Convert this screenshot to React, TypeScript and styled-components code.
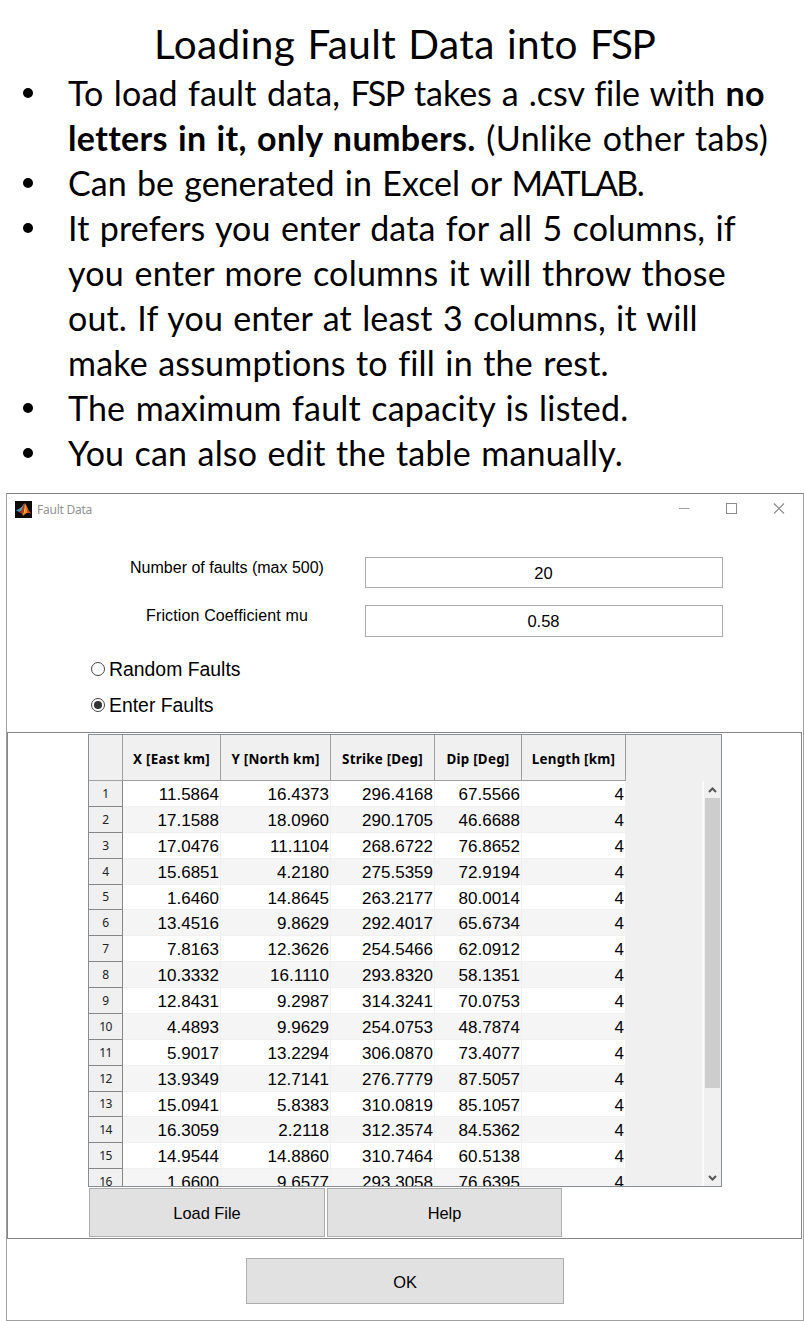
import React, { useState } from 'react';
import styled, { createGlobalStyle } from 'styled-components';

const GlobalStyle = createGlobalStyle`
  *, *::before, *::after { box-sizing: border-box; }
  body {
    margin: 0;
    background: #fff;
    color: #000;
    font-family: 'Liberation Sans', Arial, sans-serif;
  }
`;

const Page = styled.main`
  width: 804px;
  height: 1321px;
  overflow: hidden;
  background: #fff;
`;

/* ---------- Instructions ---------- */

const Slide = styled.section`
  height: 493px;
  padding-top: 21px;
  font-family: Lato, Carlito, sans-serif;
  font-variant-ligatures: none;
  word-spacing: 1.5px;
  white-space: nowrap;
`;

const Title = styled.h1`
  margin: 0 0 0 154px;
  height: 49px;
  font-size: 40.5px;
  font-weight: 400;
  line-height: 45px;
  letter-spacing: 0.38px;
`;

const Bullets = styled.ul`
  margin: 0;
  padding: 0;
  list-style: none;
`;

const Bullet = styled.li`
  display: flex;
  padding-left: 23px;

  &::before {
    content: '';
    flex: none;
    width: 10px;
    height: 10px;
    margin: 18px 35px 0 0;
    border-radius: 50%;
    background: #000;
  }
`;

const Line = styled.span<{ $track: number }>`
  display: block;
  height: 45px;
  font-size: 34px;
  line-height: 45px;
  letter-spacing: ${p => p.$track}px;
`;

const Strong = styled.strong`
  font-weight: 700;
  letter-spacing: 0.36px;
`;

const Caps = styled.span<{ $track: number }>`
  letter-spacing: ${p => p.$track}px;
`;

/* ---------- Dialog ---------- */

const Dialog = styled.section`
  display: flex;
  flex-direction: column;
  width: 798px;
  height: 828px;
  margin-left: 6px;
  border: 1px solid #a0a0a0;
  border-top-color: #838383;
`;

const TitleBar = styled.header`
  display: flex;
  align-items: center;
  height: 30px;
  padding: 0 18px 0 8px;
`;

const Caption = styled.span`
  flex: 1;
  margin-left: 5px;
  font: 12px 'Noto Sans', sans-serif;
  letter-spacing: -0.25px;
  color: #929292;
`;

const WindowControls = styled.div`
  display: flex;
  gap: 36px;
`;

const Form = styled.div`
  height: 208px;
  padding-top: 33px;
`;

const Field = styled.label<{ $gap: number; $height: number }>`
  display: flex;
  height: ${p => p.$height}px;
  margin-bottom: ${p => p.$gap}px;
`;

const FieldLabel = styled.span<{ $track?: number }>`
  width: 278px;
  margin: 1px 0 0 81px;
  font-size: 16px;
  line-height: 20px;
  letter-spacing: ${p => p.$track ?? 0}px;
  text-align: center;
`;

const FieldInput = styled.input`
  width: 358px;
  margin: 0 0 0 -1px;
  padding: 1px 1px 0 0;
  border: 1px solid #abadb3;
  border-radius: 0;
  background: #fff;
  font: 16.5px 'Liberation Sans', Arial, sans-serif;
  text-align: center;
  outline: none;
`;

const RadioRow = styled.label`
  display: flex;
  align-items: center;
  height: 36px;
  padding-left: 84px;
  font-size: 19.4px;
`;

const RadioText = styled.span`
  padding-top: 1px;
`;

const RadioDot = styled.span<{ $on: boolean }>`
  display: grid;
  place-items: center;
  width: 14px;
  height: 14px;
  margin-right: 4px;
  border: 1px solid #444;
  border-radius: 50%;

  &::after {
    content: '';
    width: 8px;
    height: 8px;
    border-radius: 50%;
    background: ${p => (p.$on ? '#333' : 'transparent')};
  }
`;

const HiddenRadio = styled.input`
  appearance: none;
  width: 0;
  height: 0;
  margin: 0;
`;

const Panel = styled.div`
  width: 795px;
  height: 507px;
  padding: 1px 0 0 80px;
  border: 1px solid #868686;
`;

/* ---------- Table ---------- */

const TableFrame = styled.div`
  display: flex;
  width: 634px;
  height: 453px;
  overflow: hidden;
  border: 1px solid #888d96;
  background: #f0f0f0;
`;

const columns = '34px 98px 110px 104px 87px 104px';

const Grid = styled.div`
  width: 537px;
  flex: none;
`;

const HeadRow = styled.div`
  display: grid;
  grid-template-columns: ${columns};
  height: 46px;
`;

const HeadCell = styled.div`
  display: flex;
  align-items: center;
  justify-content: center;
  padding-top: 3px;
  border-right: 1px solid #a0a0a0;
  border-bottom: 1px solid #a0a0a0;
  font: 700 13.4px 'Noto Sans', sans-serif;
  letter-spacing: 0.24px;
  white-space: nowrap;
`;

const Row = styled.div<{ $alt: boolean }>`
  display: grid;
  grid-template-columns: ${columns};
  grid-template-rows: 100%;
  height: 25.88px;
  background: ${p => (p.$alt ? '#f5f5f5' : '#fff')};
`;

const RowNumber = styled.div`
  display: flex;
  align-items: center;
  justify-content: center;
  padding-top: 1px;
  border-right: 1px solid #868686;
  border-bottom: 1px solid #868686;
  background: #f0f0f0;
  font: 12px/16px 'Noto Sans', sans-serif;
  letter-spacing: -0.5px;
  color: #222;
`;

const Cell = styled.div`
  padding: 2px 1px 0 0;
  border-right: 1px solid #f0f0f0;
  border-bottom: 1px solid #f0f0f0;
  font-size: 17px;
  line-height: 24px;
  text-align: right;
`;

const ScrollBar = styled.div`
  display: flex;
  flex-direction: column;
  align-items: center;
  width: 19px;
  margin: 46px 0 0 auto;
  border-left: 2px solid #fafafa;
`;

const ArrowButton = styled.span`
  display: grid;
  place-items: center;
  width: 17px;
  height: 17px;
`;

const Thumb = styled.div`
  width: 15px;
  height: 290px;
  margin-bottom: auto;
  background: #cdcdcd;
`;

/* ---------- Buttons ---------- */

const Actions = styled.div`
  display: flex;
  gap: 2px;
  padding: 1px 0 0 1px;
`;

const Button = styled.button<{ $width: number; $height: number }>`
  width: ${p => p.$width}px;
  height: ${p => p.$height}px;
  padding: 2px 0 0;
  border: 1px solid #adadad;
  border-radius: 0;
  background: #e1e1e1;
  color: #000;
  font: 16.4px 'Liberation Sans', Arial, sans-serif;
`;

const Footer = styled.footer`
  padding: 19px 0 0 239px;
`;

const faults: string[][] = [
  ['11.5864', '16.4373', '296.4168', '67.5566', '4'],
  ['17.1588', '18.0960', '290.1705', '46.6688', '4'],
  ['17.0476', '11.1104', '268.6722', '76.8652', '4'],
  ['15.6851', '4.2180', '275.5359', '72.9194', '4'],
  ['1.6460', '14.8645', '263.2177', '80.0014', '4'],
  ['13.4516', '9.8629', '292.4017', '65.6734', '4'],
  ['7.8163', '12.3626', '254.5466', '62.0912', '4'],
  ['10.3332', '16.1110', '293.8320', '58.1351', '4'],
  ['12.8431', '9.2987', '314.3241', '70.0753', '4'],
  ['4.4893', '9.9629', '254.0753', '48.7874', '4'],
  ['5.9017', '13.2294', '306.0870', '73.4077', '4'],
  ['13.9349', '12.7141', '276.7779', '87.5057', '4'],
  ['15.0941', '5.8383', '310.0819', '85.1057', '4'],
  ['16.3059', '2.2118', '312.3574', '84.5362', '4'],
  ['14.9544', '14.8860', '310.7464', '60.5138', '4'],
  ['1.6600', '9.6577', '293.3058', '76.6395', '4'],
];

const headings = ['', 'X [East km]', 'Y [North km]', 'Strike [Deg]', 'Dip [Deg]', 'Length [km]'];

const MatlabIcon = () => (
  <svg width="17" height="17" viewBox="0 0 17 17">
    <rect width="17" height="17" fill="#0c0b0c" />
    <path d="M1 9.3 4.6 7.6 6.4 9.2 4.2 11.3Z" fill="#3d8fb5" />
    <path d="M4.6 7.6C6.6 7 7.5 4.6 9.2 2.6L7.6 8.6 6.2 10.6 5.2 9.6Z" fill="#62a6b4" />
    <path d="M4.2 11.3C6.6 10.6 7.4 6 9.6 2.2 10.2 5 9.6 9 7.8 14.6 6.8 12.6 5.8 11.6 4.2 11.3Z" fill="#b8371b" />
    <path d="M9.8 2C11.6 3.6 12.6 9 16 12.6 12.6 10.6 10.6 12.6 7.6 15.2 9.4 10.6 9.8 6.4 9.8 2Z" fill="#f08a24" />
    <path d="M9.8 3C10.4 6 10.6 9 9 12.6L7.9 14.6C9.3 10.6 9.9 7 9.8 3Z" fill="#fbd25a" />
    <path d="M10.5 3C12.2 5.6 12.8 9.6 16 12.6 14.4 11.7 13.2 11.4 12.3 11.6 12 8.6 11.4 5.4 10.5 3Z" fill="#c2441f" />
  </svg>
);

const Chevron = ({ down = false }: { down?: boolean }) => (
  <svg width="9" height="8" viewBox="0 0 9 8">
    <path d={down ? 'M1 2 4.5 5.5 8 2' : 'M1 6 4.5 2.5 8 6'} fill="none" stroke="#555" strokeWidth="2" />
  </svg>
);

export default function App() {
  const [mode, setMode] = useState('Enter Faults');

  return (
    <Page>
      <GlobalStyle />
      <Slide>
        <Title>Loading Fault Data into <Caps $track={-1.4}>FSP</Caps></Title>
        <Bullets>
          <Bullet>
            <div>
              <Line $track={-0.06}>
                <Caps $track={0.14}>To load fault data, </Caps><Caps $track={-1.4}>FSP</Caps> takes a .csv file with <Strong>no</Strong>
              </Line>
              <Line $track={0.4}><Strong>letters in it, only numbers.</Strong> (Unlike other tabs)</Line>
            </div>
          </Bullet>
          <Bullet><Line $track={0.03}>Can be generated in Excel or <Caps $track={-1.6}>MATLAB.</Caps></Line></Bullet>
          <Bullet>
            <div>
              <Line $track={0.12}>It prefers you enter data for all 5 columns, if</Line>
              <Line $track={0.25}>you enter more columns it will throw those</Line>
              <Line $track={0.13}>out. If you enter at least 3 columns, it will</Line>
              <Line $track={0.18}>make assumptions to fill in the rest.</Line>
            </div>
          </Bullet>
          <Bullet><Line $track={0.18}>The maximum fault capacity is listed.</Line></Bullet>
          <Bullet><Line $track={0.17}>You can also edit the table manually.</Line></Bullet>
        </Bullets>
      </Slide>

      <Dialog>
        <TitleBar>
          <MatlabIcon />
          <Caption>Fault Data</Caption>
          <WindowControls>
            <svg width="12" height="12"><path d="M1 5.5H11.5" stroke="#a0a0a0" /></svg>
            <svg width="11" height="12"><rect x=".5" y=".5" width="10" height="10" fill="none" stroke="#8c8c8c" /></svg>
            <svg width="12" height="12"><path d="M1 .5 11 10.5M11 .5 1 10.5" stroke="#8c8c8c" strokeWidth="1.2" /></svg>
          </WindowControls>
        </TitleBar>

        <Form>
          <Field $height={31} $gap={17}>
            <FieldLabel>Number of faults (max 500)</FieldLabel>
            <FieldInput defaultValue="20" />
          </Field>
          <Field $height={32} $gap={14}>
            <FieldLabel $track={0.13}>Friction Coefficient mu</FieldLabel>
            <FieldInput defaultValue="0.58" />
          </Field>
          {['Random Faults', 'Enter Faults'].map(name => (
            <RadioRow key={name}>
              <HiddenRadio type="radio" name="mode" checked={mode === name} onChange={() => setMode(name)} />
              <RadioDot $on={mode === name} />
              <RadioText>{name}</RadioText>
            </RadioRow>
          ))}
        </Form>

        <Panel>
          <TableFrame>
            <Grid>
              <HeadRow>{headings.map(h => <HeadCell key={h}>{h}</HeadCell>)}</HeadRow>
              {faults.map((fault, i) => (
                <Row key={i} $alt={i % 2 === 1}>
                  <RowNumber>{i + 1}</RowNumber>
                  {fault.map((value, c) => <Cell key={c}>{value}</Cell>)}
                </Row>
              ))}
            </Grid>
            <ScrollBar>
              <ArrowButton><Chevron /></ArrowButton>
              <Thumb />
              <ArrowButton><Chevron down /></ArrowButton>
            </ScrollBar>
          </TableFrame>
          <Actions>
            <Button $width={236} $height={49}>Load File</Button>
            <Button $width={235} $height={49}>Help</Button>
          </Actions>
        </Panel>

        <Footer>
          <Button $width={318} $height={46}>OK</Button>
        </Footer>
      </Dialog>
    </Page>
  );
}
